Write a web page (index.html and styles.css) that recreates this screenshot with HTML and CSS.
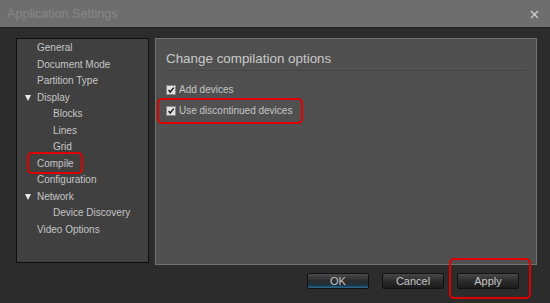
FILE: index.html
```html
<!DOCTYPE html>
<html>
<head>
<meta charset="utf-8">
<link rel="stylesheet" href="styles.css">
</head>
<body>
<div class="window">
  <div class="titlebar">
    <span class="title">Application Settings</span>
    <svg class="close" width="9" height="9" viewBox="0 0 9 9"><path d="M1 1 L8 8 M8 1 L1 8" stroke="#cfcfcf" stroke-width="1.3"/></svg>
  </div>
  <div class="main">
    <ul class="tree">
      <li class="item">General</li>
      <li class="item">Document Mode</li>
      <li class="item">Partition Type</li>
      <li class="item parent"><span class="tri"></span>Display</li>
      <li class="item child">Blocks</li>
      <li class="item child">Lines</li>
      <li class="item child">Grid</li>
      <li class="item">Compile<span class="mark mark-compile"></span></li>
      <li class="item">Configuration</li>
      <li class="item parent"><span class="tri"></span>Network</li>
      <li class="item child">Device Discovery</li>
      <li class="item">Video Options</li>
    </ul>
    <div class="content">
      <h1 class="heading">Change compilation options</h1>
      <label class="check"><span class="box"><svg width="10" height="10" viewBox="0 0 10 10"><path d="M2 5 L4 7.5 L8.5 2" fill="none" stroke="#1a1a1a" stroke-width="1.8"/></svg></span>Add devices</label>
      <label class="check"><span class="box"><svg width="10" height="10" viewBox="0 0 10 10"><path d="M2 5 L4 7.5 L8.5 2" fill="none" stroke="#1a1a1a" stroke-width="1.8"/></svg></span>Use discontinued devices<span class="mark mark-use"></span></label>
    </div>
  </div>
  <div class="footer">
    <button class="btn ok">OK</button>
    <button class="btn">Cancel</button>
    <button class="btn">Apply<span class="mark mark-apply"></span></button>
  </div>
</div>
</body>
</html>
```

FILE: styles.css
```css
* { box-sizing: border-box; }
html, body { margin: 0; padding: 0; }
body {
  width: 550px;
  height: 303px;
  background: #2c2c2c;
  font-family: "Liberation Sans", Arial, sans-serif;
  overflow: hidden;
}
.window { width: 550px; height: 303px; display: flex; flex-direction: column; }
.titlebar {
  height: 28px;
  background: #6e6e6e;
  border-bottom: 1px solid #222;
  display: flex;
  align-items: center;
  justify-content: space-between;
  padding: 0 11px 0 7px;
}
.title { color: #878787; font-size: 12.6px; }
.close { display: block; margin-top: 1px; }
.main {
  display: flex;
  gap: 6px;
  padding: 10px 0 0 16px;
  align-items: flex-start;
}
.tree {
  list-style: none;
  margin: 0;
  padding: 1px 0 0 0;
  width: 133px;
  height: 225px;
  background: #404040;
  border: 1px solid #0e0e0e;
}
.item {
  position: relative;
  height: 16.5px;
  line-height: 16.5px;
  padding-left: 20px;
  color: #c6c6c6;
  font-size: 10px;
  white-space: nowrap;
}
.item.child { padding-left: 36px; }
.item.parent { padding-left: 8px; display: flex; align-items: center; }
.tri {
  width: 0; height: 0;
  border-left: 3px solid transparent;
  border-right: 3px solid transparent;
  border-top: 6px solid #eaeaea;
  margin-right: 6px;
  margin-top: 1px;
}
.content {
  position: relative;
  width: 382px;
  height: 227px;
  background: #505050;
  border: 1px solid #737373;
  padding: 11px 9px 0 10px;
}
.heading {
  margin: 0;
  font-weight: normal;
  font-size: 13.4px;
  color: #c9c9c9;
  height: 21px;
  line-height: 18px;
  border-bottom: 1px solid #454545;
  margin-bottom: 8px;
}
.check {
  position: relative;
  display: flex;
  align-items: center;
  height: 21px;
  color: #c6c6c6;
  font-size: 10px;
  gap: 3px;
}
.box {
  width: 10px; height: 10px;
  background: #e2e2e2;
  border: 1px solid #888;
  display: flex; align-items: center; justify-content: center;
}
.box svg { display: block; }
.footer {
  display: flex;
  justify-content: flex-end;
  gap: 13px;
  padding: 8px 31px 0 0;
}
.btn {
  position: relative;
  width: 62px;
  height: 16px;
  border: 1px solid #111;
  border-radius: 2px;
  background: linear-gradient(#474747, #2a2a2a 55%, #1b1b1b);
  color: #c4c4c4;
  font-family: "Liberation Sans", Arial, sans-serif;
  font-size: 11px;
  padding: 0;
  line-height: 14px;
}
.btn.ok {
  background: linear-gradient(#4a4a4a, #2c2c2c 50%, #1d3342 80%, #2a6e9a);
}
.mark {
  position: absolute;
  border: 2px solid #e00000;
  border-radius: 5px;
  pointer-events: none;
}
.mark-compile { left: 10px; top: -4px; width: 56px; height: 22px; }
.mark-use { left: -9px; top: -2px; width: 146px; height: 26px; }
.mark-apply { left: -9px; top: -16px; width: 82px; height: 41px; }
```
